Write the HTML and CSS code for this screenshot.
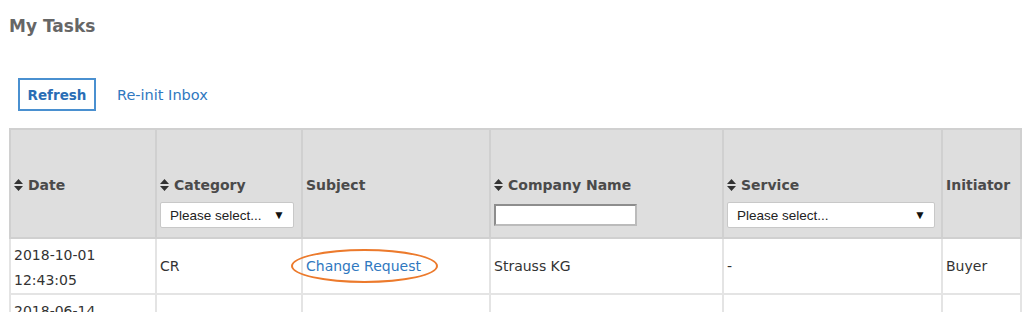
FILE: index.html
```html
<!DOCTYPE html>
<html lang="en">
<head>
  <meta charset="UTF-8">
  <title>My Tasks</title>
  <link rel="stylesheet" href="styles.css">
</head>
<body>

  <h1>My Tasks</h1>

  <div class="toolbar">
    <button class="btn-refresh">Refresh</button>
    <a class="link" href="#">Re-init Inbox</a>
  </div>

  <table class="tasks">
    <thead>
      <tr>
        <th class="c-date"><span class="sort"><svg width="9" height="12" viewBox="0 0 9 12"><path d="M4.5 0L9 5H0z M4.5 12L0 7h9z" fill="#333"/></svg></span>Date<div class="filter"></div></th>
        <th class="c-cat"><span class="sort"><svg width="9" height="12" viewBox="0 0 9 12"><path d="M4.5 0L9 5H0z M4.5 12L0 7h9z" fill="#333"/></svg></span>Category
          <div class="filter"><div class="select"><span>Please select...</span><span class="arrow">&#9660;</span></div></div></th>
        <th class="c-subj">Subject<div class="filter"></div></th>
        <th class="c-comp"><span class="sort"><svg width="9" height="12" viewBox="0 0 9 12"><path d="M4.5 0L9 5H0z M4.5 12L0 7h9z" fill="#333"/></svg></span>Company Name
          <div class="filter"><input type="text" class="text-filter"></div></th>
        <th class="c-serv"><span class="sort"><svg width="9" height="12" viewBox="0 0 9 12"><path d="M4.5 0L9 5H0z M4.5 12L0 7h9z" fill="#333"/></svg></span>Service
          <div class="filter"><div class="select wide"><span>Please select...</span><span class="arrow">&#9660;</span></div></div></th>
        <th class="c-init">Initiator<div class="filter"></div></th>
      </tr>
    </thead>
    <tbody>
      <tr>
        <td class="date">2018-10-01<br>12:43:05</td>
        <td>CR</td>
        <td><span class="marked"><a class="link" href="#">Change Request</a></span></td>
        <td>Strauss KG</td>
        <td>-</td>
        <td>Buyer</td>
      </tr>
      <tr>
        <td class="date">2018-06-14<br>09:12:44</td>
        <td>CR</td>
        <td><a class="link" href="#">Change Request</a></td>
        <td>Strauss KG</td>
        <td>-</td>
        <td>Buyer</td>
      </tr>
    </tbody>
  </table>

</body>
</html>
```

FILE: styles.css
```css
body {
  font-family: "DejaVu Sans", Verdana, sans-serif;
  font-size: 13px;
  color: #333;
  margin: 0;
  padding: 0 9px;
  background: #fff;
}
h1 {
  font-size: 17px;
  color: #666;
  margin: 0;
  padding-top: 16px;
  height: 56px;
}
.toolbar {
  display: flex;
  align-items: center;
  gap: 21px;
  padding-left: 9px;
  height: 45px;
  margin-bottom: 11px;
}
.btn-refresh {
  font-family: inherit;
  font-size: 13.5px;
  font-weight: bold;
  color: #2a6db5;
  background: #fff;
  border: 2px solid #4a90d0;
  height: 33px;
  width: 78px;
  padding: 0;
}
.link {
  color: #2f78c0;
  text-decoration: none;
}
.toolbar .link {
  font-size: 14.5px;
}
table.tasks {
  width: 1011px;
  border-collapse: collapse;
  table-layout: fixed;
  border: 2px solid #d4d4d4;
}
th, td {
  border: 2px solid #e4e4e4;
  padding: 0 3px;
  text-align: left;
}
th {
  background: #dedede;
  border-color: #d0d0d0;
  color: #4a4a4a;
  font-size: 14px;
  vertical-align: top;
  padding-top: 47px;
  height: 60px;
  white-space: nowrap;
}
.c-date { width: 138px; }
.c-cat { width: 138px; }
.c-subj { width: 180px; }
.c-comp { width: 225px; }
.c-serv { width: 211px; }
.c-init { width: 71px; }
.sort {
  display: inline-block;
  margin-right: 5px;
  vertical-align: -1px;
}
.filter {
  height: 26px;
  margin-top: 8px;
}
.select {
  display: flex;
  justify-content: space-between;
  align-items: center;
  box-sizing: border-box;
  width: 134px;
  height: 26px;
  background: #fff;
  border: 1px solid #c8c8c8;
  border-radius: 2px;
  padding: 0 8px 0 9px;
  font-family: "Liberation Sans", Arial, sans-serif;
  font-size: 13.5px;
  font-weight: normal;
  color: #222;
}
.select.wide {
  width: 208px;
}
.arrow {
  font-size: 12px;
  color: #111;
}
.text-filter {
  box-sizing: border-box;
  width: 143px;
  height: 22px;
  margin-top: 2px;
  border: 2px solid #8d8d8d;
  border-right-color: #bbb;
  border-bottom-color: #bbb;
  background: #fff;
  padding: 0;
}
td {
  height: 50px;
  padding: 2px 3px;
  font-size: 14px;
  line-height: 25px;
  vertical-align: middle;
}
td.date {
  padding-top: 4px;
  padding-bottom: 0;
}
.marked {
  position: relative;
}
.marked::after {
  content: "";
  position: absolute;
  left: -15px;
  right: -17px;
  top: -9px;
  bottom: -9px;
  border: 2px solid #ec7a2c;
  border-radius: 50%;
}
```
